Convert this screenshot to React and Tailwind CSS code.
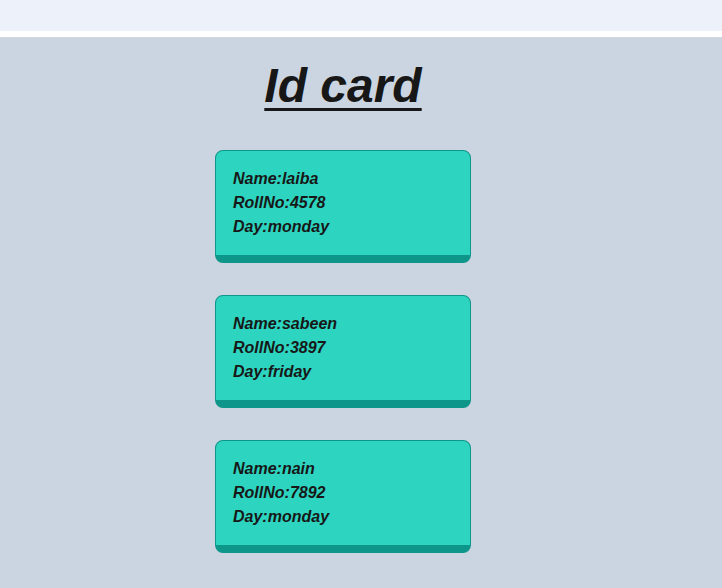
export default function App() {
  const cards = [
    { name: "laiba", roll: "4578", day: "monday" },
    { name: "sabeen", roll: "3897", day: "friday" },
    { name: "nain", roll: "7892", day: "monday" },
  ];
  return (
    <div className="min-h-screen flex flex-col bg-[#cbd5e1]" style={{ fontFamily: '"Liberation Sans", Arial, sans-serif' }}>
      <div className="h-[31px] bg-[#edf2fa]"></div>
      <div className="h-[6px] bg-white"></div>
      <div className="h-px bg-[#d4d8de]"></div>
      <div className="flex-1 pt-[24px] pb-[35px]">
        <div className="ml-[215px] w-[256px] flex flex-col">
          <h1 className="text-center text-[48px] leading-[48px] font-bold italic underline text-[#171717] decoration-[3px] underline-offset-[6px]">
            Id card
          </h1>
          <div className="mt-[40px] flex flex-col gap-8">
            {cards.map((c) => (
              <div
                key={c.name}
                className="h-[113px] rounded-lg border border-b-8 border-[#0f968a] bg-[#2dd4bf] pl-[17px] pr-4 pt-[16px] text-[16px] leading-6 font-bold italic text-[#171717]"
              >
                <p>Name:{c.name}</p>
                <p>RollNo:{c.roll}</p>
                <p>Day:{c.day}</p>
              </div>
            ))}
          </div>
        </div>
      </div>
    </div>
  );
}
